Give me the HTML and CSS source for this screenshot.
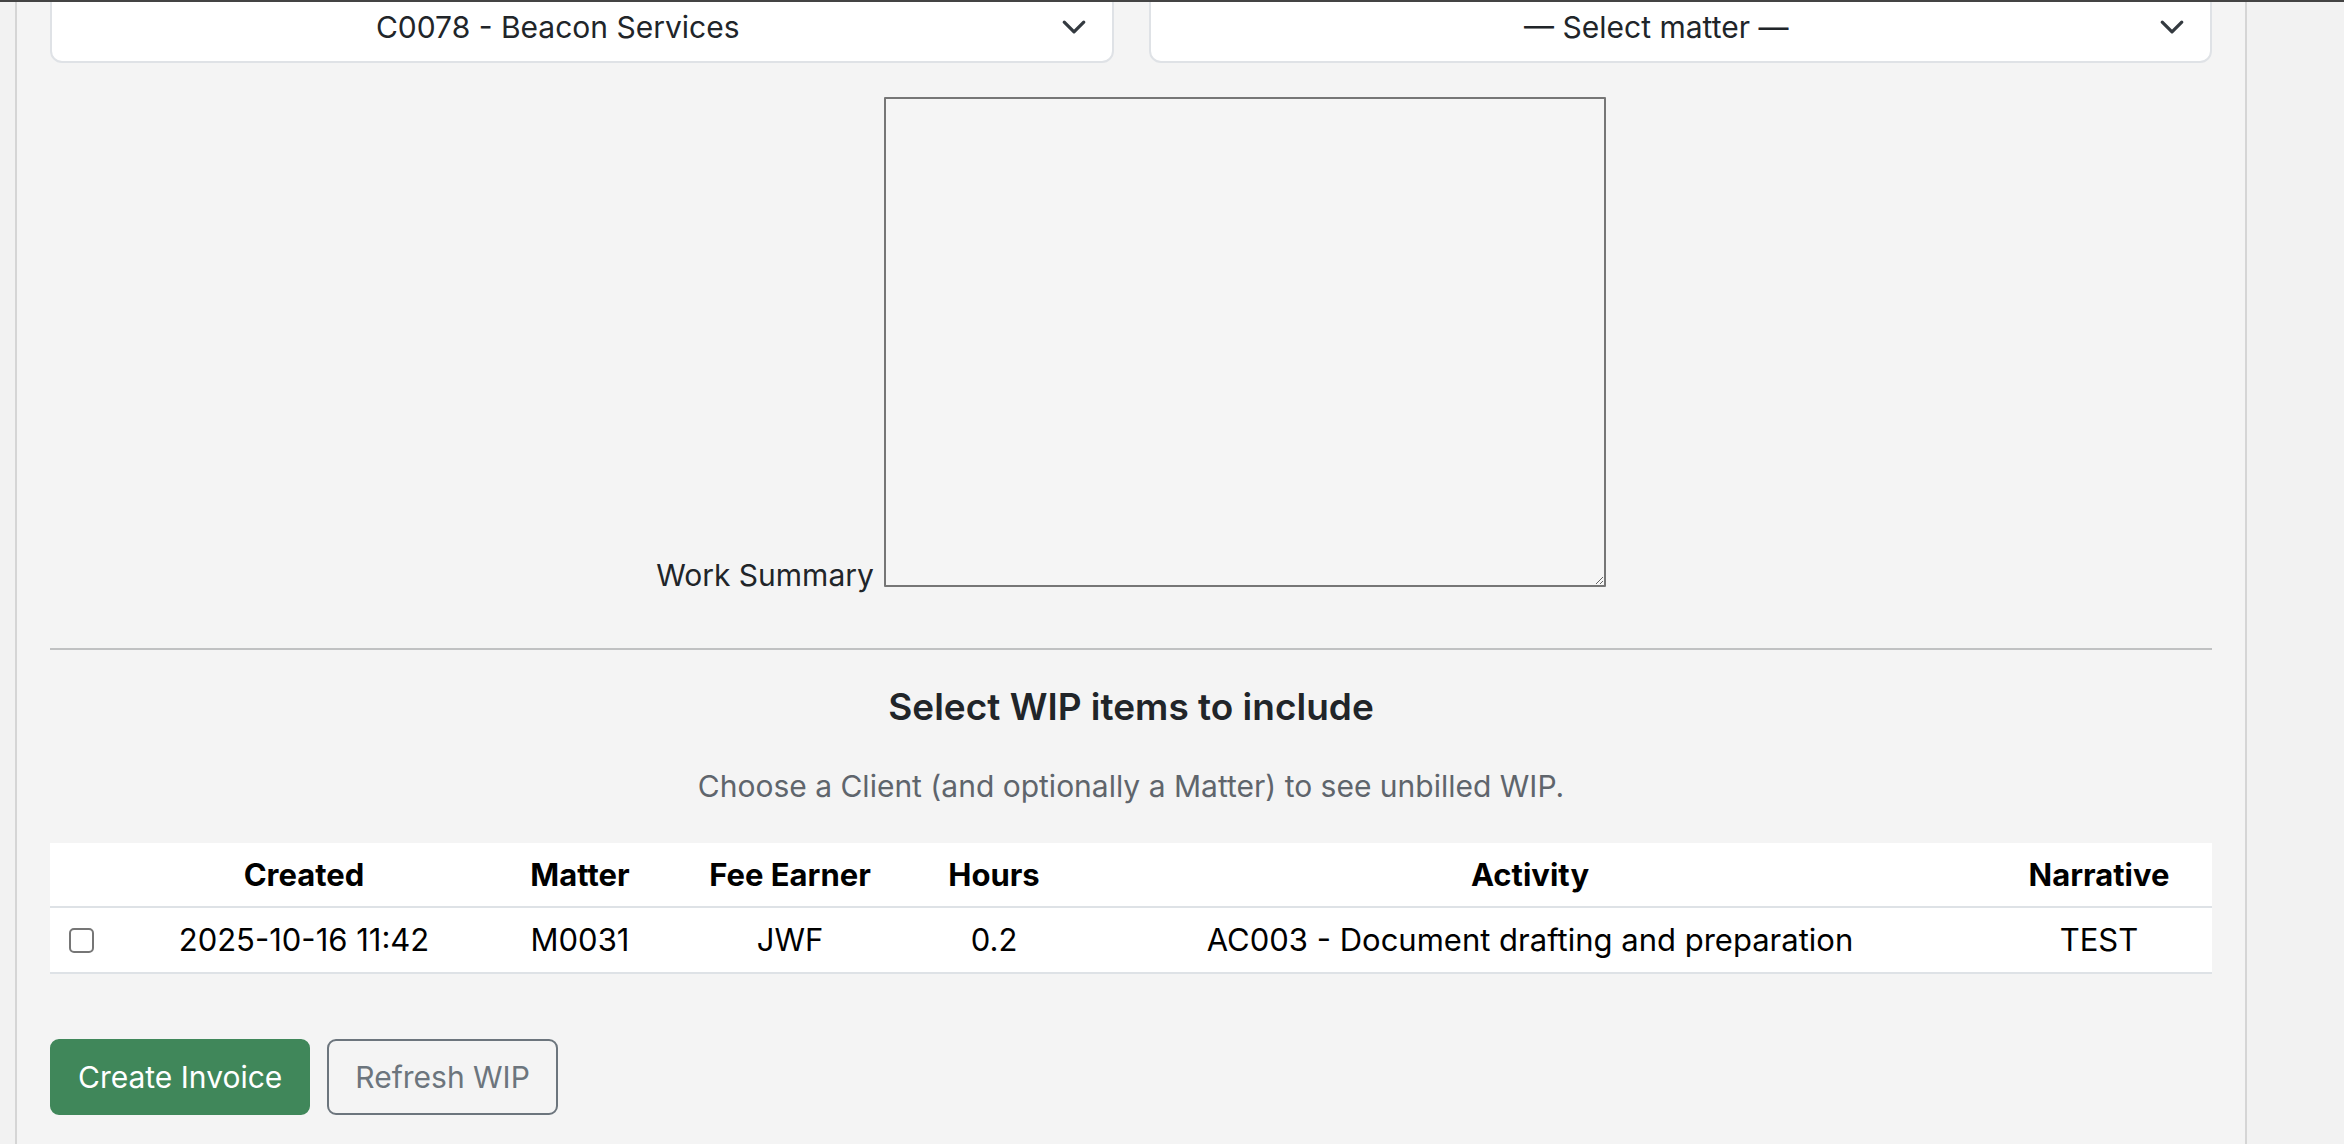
FILE: index.html
```html
<!DOCTYPE html>
<html lang="en">
<head>
<meta charset="utf-8">
<title>Create Invoice</title>
<link rel="stylesheet" href="styles.css">
</head>
<body>
<div class="topbar"></div>
<div class="page">
  <main class="panel">
    <div class="pickers">
      <div class="picker">
        <select class="picker-select">
          <option>C0078 - Beacon Services</option>
        </select>
        <svg class="chevron" viewBox="0 0 16 16" width="26" height="26" aria-hidden="true"><path d="M2 5l6 6 6-6" fill="none" stroke="#343a40" stroke-width="2" stroke-linecap="round" stroke-linejoin="round"/></svg>
      </div>
      <div class="picker">
        <select class="picker-select">
          <option>— Select matter —</option>
        </select>
        <svg class="chevron" viewBox="0 0 16 16" width="26" height="26" aria-hidden="true"><path d="M2 5l6 6 6-6" fill="none" stroke="#343a40" stroke-width="2" stroke-linecap="round" stroke-linejoin="round"/></svg>
      </div>
    </div>

    <div class="summary-row">
      <label class="summary-label" for="summary">Work Summary</label>
      <textarea id="summary" class="summary-input"></textarea>
    </div>

    <hr class="divider">

    <h5 class="section-title">Select WIP items to include</h5>
    <p class="section-hint">Choose a Client (and optionally a Matter) to see unbilled WIP.</p>

    <table class="wip-table">
      <colgroup>
        <col class="c-check"><col class="c-created"><col class="c-matter"><col class="c-earner"><col class="c-hours"><col class="c-activity"><col class="c-narrative">
      </colgroup>
      <thead>
        <tr>
          <th></th>
          <th>Created</th>
          <th>Matter</th>
          <th>Fee Earner</th>
          <th>Hours</th>
          <th>Activity</th>
          <th>Narrative</th>
        </tr>
      </thead>
      <tbody>
        <tr>
          <td class="check-cell"><input type="checkbox" class="row-check"></td>
          <td>2025-10-16 11:42</td>
          <td>M0031</td>
          <td>JWF</td>
          <td>0.2</td>
          <td>AC003 - Document drafting and preparation</td>
          <td>TEST</td>
        </tr>
      </tbody>
    </table>

    <div class="actions">
      <button class="btn btn-primary" type="button">Create Invoice</button>
      <button class="btn btn-outline" type="button">Refresh WIP</button>
    </div>
  </main>
</div>
</body>
</html>
```
FILE: styles.css
```css
* {
  box-sizing: border-box;
}

html, body {
  margin: 0;
  padding: 0;
  height: 100%;
  overflow: hidden;
}

body {
  background: #f2f2f2;
  font-family: "Inter", "Liberation Sans", sans-serif;
  font-size: 30px;
  color: #212529;
}

.topbar {
  position: fixed;
  top: 0;
  left: 0;
  right: 0;
  height: 2px;
  background: #444444;
  z-index: 10;
}

.page {
  padding-left: 15px;
}

.panel {
  width: 2232px;
  background: #f4f4f4;
  border-left: 2px solid #d5d5d5;
  border-right: 2px solid #d5d5d5;
  padding: 0 33px 40px;
  margin-top: -9px;
  min-height: 1300px;
}

/* pickers */
.pickers {
  display: grid;
  grid-template-columns: 1fr 1fr;
  gap: 35px;
}

.picker {
  position: relative;
}

.picker-select {
  appearance: none;
  -webkit-appearance: none;
  width: 100%;
  height: 72px;
  background: #ffffff;
  border: 2px solid #dfe2e6;
  border-radius: 12px;
  padding: 0 72px 0 24px;
  font-family: inherit;
  font-size: 30px;
  color: #212529;
  text-align: center;
  text-align-last: center;
}

.chevron {
  position: absolute;
  right: 27px;
  top: 23px;
  pointer-events: none;
}

/* summary */
.summary-row {
  display: flex;
  justify-content: center;
  align-items: flex-end;
  gap: 10px;
  margin-top: 34px;
}

.summary-label {
  line-height: 24px;
  color: #212529;
}

.summary-input {
  width: 722px;
  height: 490px;
  border: 2px solid #767676;
  border-radius: 1px;
  background: #f5f5f5;
  font-family: inherit;
  font-size: 30px;
  margin: 0;
  display: block;
}

.divider {
  margin: 61px 0 0;
  border: 0;
  border-top: 2px solid #c0c1c2;
}

.section-title {
  margin: 35px 0 0;
  text-align: center;
  font-size: 37px;
  font-weight: 600;
  line-height: 44px;
  color: #212529;
}

.section-hint {
  margin: 35px 0 0;
  text-align: center;
  line-height: 45px;
  color: #5f656c;
}

/* table */
.wip-table {
  margin-top: 34px;
  width: 100%;
  border-collapse: collapse;
  table-layout: fixed;
  background: #ffffff;
  color: #000000;
  font-size: 31px;
}

.c-check { width: 64px; }
.c-created { width: 380px; }
.c-matter { width: 172px; }
.c-earner { width: 248px; }
.c-hours { width: 160px; }
.c-activity { width: 912px; }
.c-narrative { width: 226px; }

.wip-table th,
.wip-table td {
  padding: 0;
  text-align: center;
  white-space: nowrap;
  border-bottom: 2px solid #dee2e6;
}

.wip-table th {
  font-weight: 700;
  line-height: 63px;
}

.wip-table td {
  font-weight: 400;
  line-height: 64px;
}

.wip-table td.check-cell {
  text-align: left;
  padding-left: 19px;
}

.row-check {
  appearance: none;
  -webkit-appearance: none;
  width: 25px;
  height: 25px;
  margin: 0;
  border: 2px solid #767676;
  border-radius: 5px;
  background: #ffffff;
  vertical-align: middle;
  position: relative;
  top: -2px;
}

/* actions */
.actions {
  display: flex;
  gap: 17px;
  margin-top: 65px;
}

.btn {
  height: 76px;
  padding: 0 26px;
  border-radius: 9px;
  font-family: inherit;
  font-size: 30px;
  line-height: 1;
  cursor: pointer;
}

.btn-primary {
  background: #40875a;
  border: 2px solid #40875a;
  color: #ffffff;
}

.btn-outline {
  background: transparent;
  border: 2px solid #6c757d;
  color: #6c757d;
}
```
